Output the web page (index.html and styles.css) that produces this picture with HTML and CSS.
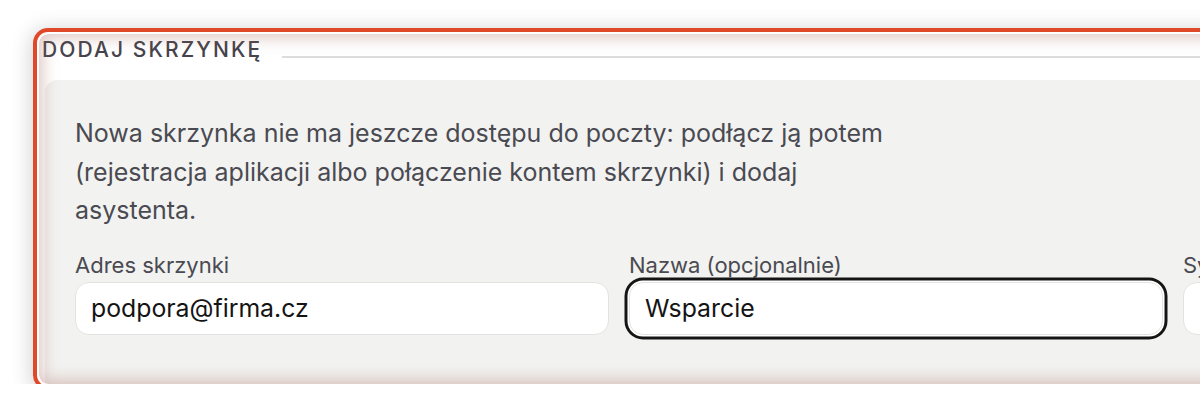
FILE: index.html
```html
<!DOCTYPE html>
<html lang="pl">
<head>
<meta charset="utf-8">
<title>Dodaj skrzynkę</title>
<link rel="stylesheet" href="styles.css">
</head>
<body>
<div class="page">
  <section class="card">
    <div class="card-head">
      <h2 class="card-title">DODAJ SKRZYNKĘ</h2>
      <span class="card-rule"></span>
    </div>
    <div class="panel">
      <p class="intro">Nowa skrzynka nie ma jeszcze dostępu do poczty: podłącz ją potem (rejestracja aplikacji albo połączenie kontem skrzynki) i dodaj asystenta.</p>
      <div class="fields">
        <label class="field">
          <span class="field-label">Adres skrzynki</span>
          <span class="input">podpora@firma.cz</span>
        </label>
        <label class="field">
          <span class="field-label">Nazwa (opcjonalnie)</span>
          <span class="input input-focus">Wsparcie</span>
        </label>
        <label class="field">
          <span class="field-label">Sygnatura</span>
          <span class="input"></span>
        </label>
      </div>
    </div>
  </section>
</div>
</body>
</html>
```

FILE: styles.css
```css
html, body {
  margin: 0;
  padding: 0;
  background: #ffffff;
  overflow: hidden;
}

body {
  font-family: Inter, "Noto Sans", "Liberation Sans", sans-serif;
  color: #4a4a52;
}

.page {
  padding: 34px 0 0 39px;
  width: 1600px;
}

.card {
  position: relative;
  width: 1450px;
  height: 350px;
  background: #ffffff;
  border-radius: 9px;
  overflow: hidden;
  box-shadow:
    0 0 0 2px #ffffff,
    0 0 0 6px #e0482a,
    0 3px 20px 9px rgba(0, 0, 0, 0.16);
}

.card::after {
  content: "";
  position: absolute;
  inset: 0;
  border-radius: inherit;
  box-shadow: inset 0 0 15px 4px rgba(165, 105, 95, 0.36);
  pointer-events: none;
}

.card-head {
  display: flex;
  align-items: flex-start;
  height: 46px;
  padding: 6px 0 0 3px;
  box-sizing: border-box;
}

.card-title {
  margin: 0;
  font-size: 21px;
  line-height: 20px;
  font-weight: 500;
  letter-spacing: 2.1px;
  color: #46434c;
}

.card-rule {
  flex: 1;
  height: 2px;
  margin: 16px 0 0 20px;
  background: #dcdcdc;
}

.panel {
  margin-left: 6px;
  background: #f2f2f0;
  border-radius: 12px 0 0 0;
  padding: 34px 30px 100px 30px;
}

.intro {
  margin: 0;
  max-width: 828px;
  font-size: 25px;
  line-height: 38.5px;
  color: #4a4a52;
}

.fields {
  display: grid;
  grid-template-columns: repeat(3, 534px);
  column-gap: 20px;
  margin-top: 22px;
}

.field {
  display: flex;
  flex-direction: column;
  gap: 4px;
}

.field-label {
  font-size: 22px;
  line-height: 26px;
  color: #4a4a52;
}

.input {
  display: flex;
  align-items: center;
  height: 53px;
  box-sizing: border-box;
  padding: 0 15px;
  background: #ffffff;
  border: 1px solid #e3e3e1;
  border-radius: 14px;
  font-size: 24.8px;
  color: #141414;
}

.input-focus {
  box-shadow: 0 0 0 1.5px #ffffff, 0 0 0 4.5px #151515;
}
```
